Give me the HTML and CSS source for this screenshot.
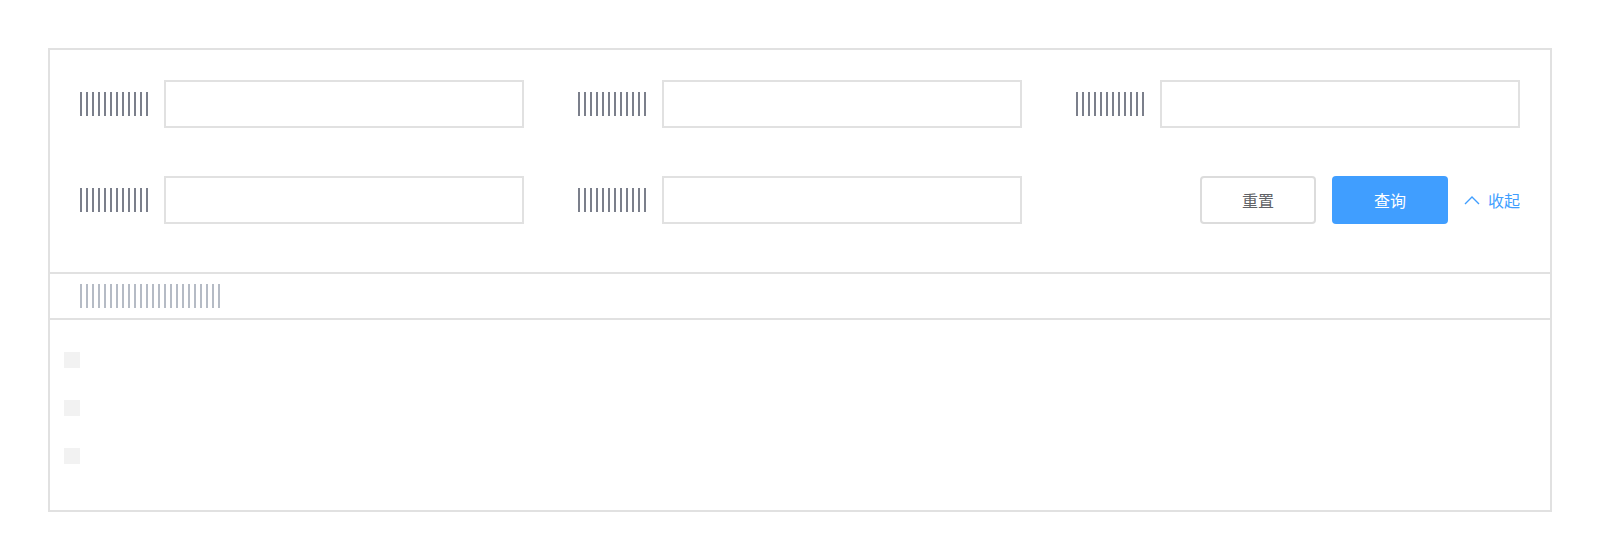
FILE: index.html
```html
<!DOCTYPE html>
<html>

<head>
  <title>查询</title>
  <link rel="stylesheet" href="styles.css">
</head>

<body>
  <!-- Search panel with filter form, toolbar and skeleton list -->
  <div class="panel">
    <form class="search-form">
      <div class="field">
        <span class="label-bars"></span>
        <input type="text" class="field-input" />
      </div>
      <div class="field">
        <span class="label-bars"></span>
        <input type="text" class="field-input" />
      </div>
      <div class="field">
        <span class="label-bars"></span>
        <input type="text" class="field-input" />
      </div>
      <div class="field">
        <span class="label-bars"></span>
        <input type="text" class="field-input" />
      </div>
      <div class="field">
        <span class="label-bars"></span>
        <input type="text" class="field-input" />
      </div>
      <div class="actions">
        <button type="button" class="btn btn-reset">重置</button>
        <button type="button" class="btn btn-search">查询</button>
        <a class="collapse-link">
          <svg width="16" height="10" viewBox="0 0 16 10">
            <polyline points="1,9 8,2 15,9" fill="none" stroke="#409eff" stroke-width="1.4" />
          </svg>
          <span>收起</span>
        </a>
      </div>
    </form>

    <!-- Toolbar row -->
    <div class="toolbar">
      <span class="toolbar-bars"></span>
    </div>

    <!-- Skeleton rows -->
    <div class="list">
      <div class="list-row"><span class="skeleton"></span></div>
      <div class="list-row"><span class="skeleton"></span></div>
      <div class="list-row"><span class="skeleton"></span></div>
    </div>
  </div>
</body>

</html>
```

FILE: styles.css
```css
body {
  font-family: "Noto Sans CJK SC", "Noto Sans", sans-serif;
  font-size: 16px;
  margin: 0;
  padding: 48px;
  background-color: #fff;
}

.panel {
  border: 2px solid #e1e1e1;
}

.search-form {
  display: grid;
  grid-template-columns: 1fr 1fr 1fr;
  column-gap: 54px;
  row-gap: 48px;
  padding: 30px 30px 48px;
  border-bottom: 2px solid #e1e1e1;
}

.field {
  display: flex;
  align-items: center;
  gap: 16px;
}

.label-bars {
  flex: none;
  width: 68px;
  height: 24px;
  background: repeating-linear-gradient(90deg, #7b7f8b 0 2px, transparent 2px 6px);
}

.field-input {
  flex: 1;
  min-width: 0;
  height: 48px;
  box-sizing: border-box;
  border: 2px solid #e1e1e1;
  border-radius: 0;
  padding: 0 10px;
  margin: 0;
  outline: none;
}

.actions {
  display: flex;
  justify-content: flex-end;
  align-items: center;
  gap: 16px;
}

.btn {
  width: 116px;
  height: 48px;
  box-sizing: border-box;
  border-radius: 4px;
  font-family: inherit;
  font-size: 16px;
  cursor: pointer;
}

.btn-reset {
  background-color: #fff;
  border: 2px solid #dcdcdc;
  color: #606266;
}

.btn-search {
  background-color: #409eff;
  border: none;
  color: #fff;
}

.collapse-link {
  display: flex;
  align-items: center;
  gap: 8px;
  color: #409eff;
  cursor: pointer;
}

.collapse-link svg {
  display: block;
}

.toolbar {
  height: 44px;
  padding: 0 30px;
  display: flex;
  align-items: center;
  border-bottom: 2px solid #e1e1e1;
}

.toolbar-bars {
  width: 140px;
  height: 24px;
  background: repeating-linear-gradient(90deg, #b5bbc5 0 2px, transparent 2px 6px);
}

.list {
  padding: 16px 14px 30px;
}

.list-row {
  height: 48px;
  display: flex;
  align-items: center;
}

.skeleton {
  width: 16px;
  height: 16px;
  background-color: #f2f2f2;
}
```
